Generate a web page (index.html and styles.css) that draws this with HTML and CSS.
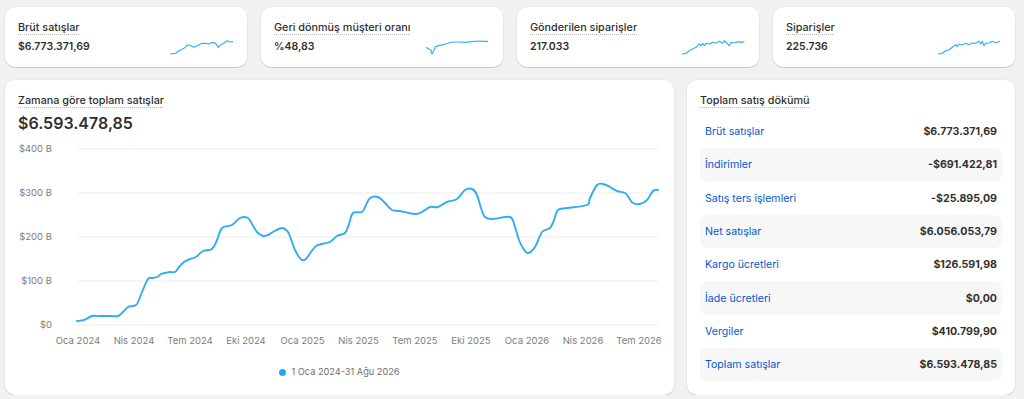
FILE: index.html
```html
<!DOCTYPE html>
<html lang="tr">
<head>
    <meta charset="UTF-8">
    <meta name="viewport" content="width=device-width, initial-scale=1.0">
    <title>Analiz</title>
    <link rel="stylesheet" href="styles.css">
</head>
<body>
    <div class="page">
        <!-- Üst metrik kartları -->
        <div class="metrics">
            <div class="card metric">
                <span class="title">Brüt satışlar</span>
                <div class="metric-body">
                    <span class="metric-value">$6.773.371,69</span>
                    <svg class="spark" width="64" height="16" viewBox="0 0 64 16">
                        <polyline points="0,15 5.7,14.3 9,11.7 14,9.3 17.3,6 20.7,6.7 24,8.3 29,5.7 32.3,4.3 35.7,4.3 39,5 42.3,3.3 45.7,4.3 48.3,8.3 50.7,5.7 54,4 57.3,1.7 59.7,3 63,2.7"/>
                    </svg>
                </div>
            </div>
            <div class="card metric">
                <span class="title">Geri dönmüş müşteri oranı</span>
                <div class="metric-body">
                    <span class="metric-value">%48,83</span>
                    <svg class="spark" width="64" height="16" viewBox="0 0 64 16">
                        <polyline points="0,8.3 2.7,10 5,11 6,15 7.7,11.7 9.3,7.7 12.7,6.7 17.7,5.7 22.7,4 27.7,3 32.7,3 39.3,3.3 46,2.7 52.7,2 57.7,2.3 62,2.3"/>
                    </svg>
                </div>
            </div>
            <div class="card metric">
                <span class="title">Gönderilen siparişler</span>
                <div class="metric-body">
                    <span class="metric-value">217.033</span>
                    <svg class="spark" width="64" height="16" viewBox="0 0 64 16">
                        <polyline points="0,15 4,14.3 7.3,11.7 10.7,10 14,8.3 17.3,5 19,6.7 20.7,4.3 22.3,6.7 24,4.3 27.3,5 30.7,3.3 34,4 37.3,2.3 40.7,4.3 42.3,1.7 45,4.3 47.3,6.7 49,3.3 52.3,4 55.7,2.7 59,3.3 62.3,2.7"/>
                    </svg>
                </div>
            </div>
            <div class="card metric">
                <span class="title">Siparişler</span>
                <div class="metric-body">
                    <span class="metric-value">225.736</span>
                    <svg class="spark" width="64" height="16" viewBox="0 0 64 16">
                        <polyline points="0,15 4.3,14.3 7.7,11.7 11,11 14.3,8.3 17.7,5.7 19.3,7.7 21,5 24.3,6 27.7,4.3 31,5.7 34.3,4 37.7,4.3 41,2.3 42.7,5 44.3,2.3 46,6.7 47.7,4.3 51,4 54.3,2.3 57.7,3.7 62,2.3"/>
                    </svg>
                </div>
            </div>
        </div>

        <div class="main">
            <!-- Zamana göre toplam satışlar -->
            <div class="card chart-card">
                <span class="title">Zamana göre toplam satışlar</span>
                <div class="big-value">$6.593.478,85</div>
                <svg class="chart" width="643" height="212" viewBox="0 0 643 212">
                    <g class="grid">
                        <line x1="60" x2="640" y1="11" y2="11"/>
                        <line x1="60" x2="640" y1="55" y2="55"/>
                        <line x1="60" x2="640" y1="99" y2="99"/>
                        <line x1="60" x2="640" y1="143" y2="143"/>
                        <line x1="60" x2="640" y1="187" y2="187"/>
                    </g>
                    <g class="y-labels">
                        <text x="34" y="11">$400 B</text>
                        <text x="34" y="55">$300 B</text>
                        <text x="34" y="99">$200 B</text>
                        <text x="34" y="143">$100 B</text>
                        <text x="34" y="187">$0</text>
                    </g>
                    <g class="x-labels">
                        <text x="60" y="203">Oca 2024</text>
                        <text x="116" y="203">Nis 2024</text>
                        <text x="172" y="203">Tem 2024</text>
                        <text x="228" y="203">Eki 2024</text>
                        <text x="284.5" y="203">Oca 2025</text>
                        <text x="340.5" y="203">Nis 2025</text>
                        <text x="397" y="203">Tem 2025</text>
                        <text x="453" y="203">Eki 2025</text>
                        <text x="509" y="203">Oca 2026</text>
                        <text x="565" y="203">Nis 2026</text>
                        <text x="621" y="203">Tem 2026</text>
                    </g>
                    <path id="sales-line" class="line" d=""/>
                </svg>
                <div class="legend"><span class="dot"></span>1 Oca 2024-31 Ağu 2026</div>
            </div>

            <!-- Toplam satış dökümü -->
            <div class="card breakdown">
                <span class="title">Toplam satış dökümü</span>
                <div class="rows">
                    <div class="row"><a href="#">Brüt satışlar</a><span>$6.773.371,69</span></div>
                    <div class="row"><a href="#">İndirimler</a><span>-$691.422,81</span></div>
                    <div class="row"><a href="#">Satış ters işlemleri</a><span>-$25.895,09</span></div>
                    <div class="row"><a href="#">Net satışlar</a><span>$6.056.053,79</span></div>
                    <div class="row"><a href="#">Kargo ücretleri</a><span>$126.591,98</span></div>
                    <div class="row"><a href="#">İade ücretleri</a><span>$0,00</span></div>
                    <div class="row"><a href="#">Vergiler</a><span>$410.799,90</span></div>
                    <div class="row"><a href="#">Toplam satışlar</a><span>$6.593.478,85</span></div>
                </div>
            </div>
        </div>
    </div>

    <script>
        // grafik noktaları (sayfa koordinatları)
        const points = [
            [77,321],[84,320],[92,316],[100,316],[110,316],[118,316],[123,312],[128,307],[133,306],[137,304],
            [142,292],[148,279],[152,278],[157,277],[161,274],[165,273],[170,272],[175,272],[179,267],[184,262],
            [190,259],[196,257],[203,251],[212,249],[217,240],[222,228],[232,225],[240,218],[248,218],[252,224],
            [257,232],[263,236],[268,235],[273,232],[282,228],[288,232],[292,242],[295,250],[299,257],[302,260],
            [306,259],[311,252],[316,246],[322,244],[330,242],[337,236],[345,233],[349,224],[353,213],[362,212],
            [366,205],[370,198],[378,197],[385,203],[392,210],[400,211],[415,214],[422,212],[430,207],[438,207],
            [447,202],[457,199],[465,190],[472,189],[477,195],[481,208],[485,217],[493,219],[510,217],[515,227],
            [519,240],[523,248],[528,253],[535,247],[542,232],[550,228],[554,220],[558,210],[567,208],[587,205],
            [590,198],[597,185],[603,184],[610,187],[617,191],[625,193],[629,198],[633,203],[640,204],[647,200],
            [653,191],[658,190]
        ].map(([x, y]) => [x - 18, y - 138]);

        // Catmull-Rom -> bezier
        function smoothPath(p) {
            let d = `M${p[0][0]},${p[0][1]}`;
            for (let i = 0; i < p.length - 1; i++) {
                const p0 = p[i - 1] || p[i];
                const p1 = p[i];
                const p2 = p[i + 1];
                const p3 = p[i + 2] || p2;
                const c1x = p1[0] + (p2[0] - p0[0]) / 6;
                const c1y = p1[1] + (p2[1] - p0[1]) / 6;
                const c2x = p2[0] - (p3[0] - p1[0]) / 6;
                const c2y = p2[1] - (p3[1] - p1[1]) / 6;
                d += ` C${c1x.toFixed(1)},${c1y.toFixed(1)} ${c2x.toFixed(1)},${c2y.toFixed(1)} ${p2[0]},${p2[1]}`;
            }
            return d;
        }

        document.getElementById('sales-line').setAttribute('d', smoothPath(points));
    </script>
</body>
</html>
```

FILE: styles.css
```css
body {
    margin: 0;
    background-color: #f1f1f1;
    font-family: 'Inter', 'Noto Sans', sans-serif;
    color: #303030;
}
.page {
    width: 1010px;
    padding: 7px 9px 0 5px;
    display: flex;
    flex-direction: column;
    gap: 13px;
}
.card {
    background-color: #ffffff;
    border-radius: 10px;
    box-shadow: 0 1px 1px rgba(0, 0, 0, 0.14), 0 0 0 1px rgba(0, 0, 0, 0.025);
    padding: 13px;
    display: flex;
    flex-direction: column;
}
.title {
    align-self: flex-start;
    font-size: 10.8px;
    font-weight: 500;
    line-height: 16px;
    text-decoration: underline dotted #b8b8b8;
    text-underline-offset: 3px;
}
/* 指标卡片 */
.metrics {
    display: grid;
    grid-template-columns: repeat(4, 1fr);
    gap: 14px;
}
.metric {
    height: 34px;
    gap: 3px;
}
.metric-body {
    display: flex;
    justify-content: space-between;
    align-items: center;
}
.metric-value {
    font-size: 10.5px;
    font-weight: 600;
    line-height: 16px;
}
.spark polyline {
    fill: none;
    stroke: #35b1f2;
    stroke-width: 1.2;
    stroke-linejoin: round;
}
/* 主区域 */
.main {
    display: grid;
    grid-template-columns: 1fr 328px;
    gap: 13px;
    height: 315px;
}
.big-value {
    margin-top: 4px;
    font-size: 16px;
    font-weight: 600;
    line-height: 20px;
}
.chart {
    margin-top: 5px;
    display: block;
}
.grid line {
    stroke: #ebebeb;
    stroke-width: 1;
}
.chart text {
    font-family: 'Inter', 'Noto Sans', sans-serif;
    font-size: 9.5px;
    fill: #7c7c7c;
    dominant-baseline: middle;
}
.y-labels text {
    text-anchor: end;
}
.x-labels text {
    text-anchor: middle;
}
.line {
    fill: none;
    stroke: #30adf0;
    stroke-width: 1.9;
    stroke-linejoin: round;
    stroke-linecap: round;
}
.legend {
    margin-top: 15px;
    display: flex;
    justify-content: center;
    align-items: center;
    gap: 5px;
    font-size: 9.2px;
    line-height: 14px;
    color: #6e6e6e;
}
.dot {
    width: 7px;
    height: 7px;
    border-radius: 50%;
    background-color: #1fa8f0;
}
/* 销售明细 */
.rows {
    margin-top: 6px;
    display: flex;
    flex-direction: column;
}
.row {
    height: 33.3px;
    padding: 0 5px;
    display: flex;
    justify-content: space-between;
    align-items: center;
    border-radius: 8px;
    font-size: 10.6px;
}
.row:nth-child(even) {
    background-color: #f7f7f7;
}
.row a {
    color: #005bd3;
    text-decoration: none;
}
.row span {
    font-weight: 700;
}
```
